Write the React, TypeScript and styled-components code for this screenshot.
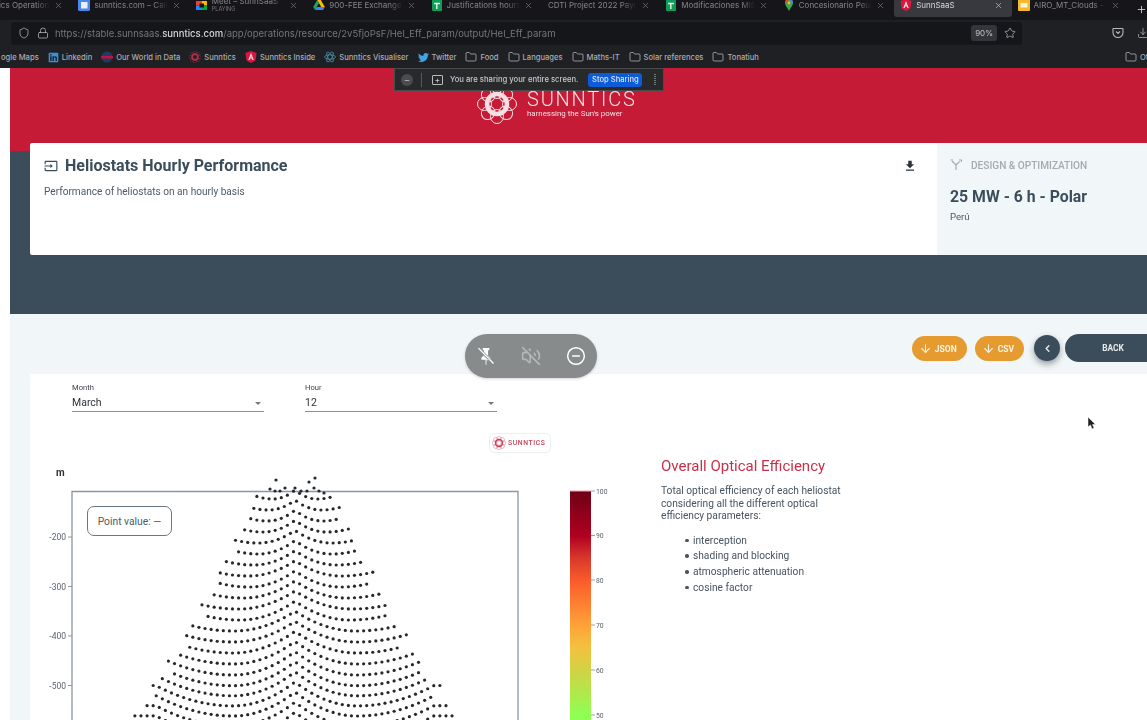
import React from "react";
import styled, { createGlobalStyle } from "styled-components";
import { ArrowDown, ChevronLeft, CircleMinus, Download, Folder, Lock, Plus, Shield, Star, VolumeOff, X } from "lucide-react";
import { FaLinkedin, FaTwitter } from "react-icons/fa";
import { MdFileDownload, MdInput } from "react-icons/md";

const GlobalStyle = createGlobalStyle`
  html, body { margin: 0; padding: 0; background: #fff; }
  body { font-family: Roboto, "Liberation Sans", sans-serif; }
  * { box-sizing: border-box; }
`;

const Viewport = styled.div`
  position: relative;
  width: 1147px;
  height: 720px;
  overflow: hidden;
`;

const Screen = styled.div`
  width: 1147px;
  height: 720px;
  overflow: hidden;
  filter: blur(0.55px);
`;

/* browser chrome */
const TabBar = styled.div`
  display: flex;
  height: 20px;
  margin-left: -45px;
  background: #16161a;
  font-family: Inter, "Liberation Sans", sans-serif;
`;

const Tab = styled.div<{ $active?: boolean }>`
  flex: 0 0 117.4px;
  min-width: 0;
  height: 17px;
  display: flex;
  align-items: center;
  gap: 4px;
  padding: 0 9px 7px 6px;
  border-radius: 0 0 3px 3px;
  background: ${(p) => (p.$active ? "#38393e" : "transparent")};
  color: ${(p) => (p.$active ? "#d8d8da" : "#85858a")};
`;

const TabText = styled.div`
  flex: 1;
  min-width: 0;
  overflow: hidden;
`;

const TabLabel = styled.div`
  overflow: hidden;
  white-space: nowrap;
  font-size: 8px;
  line-height: 9px;
  -webkit-mask-image: linear-gradient(90deg, #000 82%, transparent);
  mask-image: linear-gradient(90deg, #000 82%, transparent);
`;

const TabSub = styled.div`
  font-size: 5.5px;
  line-height: 7px;
  color: #77777b;
`;

const IconGap = styled.span`
  flex: 0 0 12px;
`;

const NewTab = styled.div`
  position: absolute;
  top: 0;
  left: 1136px;
  color: #ccc;
`;

const UrlRow = styled.div`
  display: flex;
  align-items: center;
  height: 26px;
  padding: 0 0 0 11px;
  background: #1f2024;
  color: #b8b8bb;
`;

const UrlField = styled.div`
  flex: 0 0 1011px;
  height: 23px;
  display: flex;
  align-items: center;
  gap: 7px;
  padding: 0 6px 0 7px;
  border-radius: 3px;
  background: #15161a;
`;

const UrlText = styled.span`
  flex: 1;
  margin-left: -1px;
  font: 9.5px Inter, "Liberation Sans", sans-serif;
  color: #76767a;
  white-space: nowrap;

  b {
    font-weight: 500;
    color: #d5d5d7;
  }
`;

const Zoom = styled.span`
  padding: 3px 4px;
  border-radius: 3px;
  background: #34353a;
  font: 8px Inter, "Liberation Sans", sans-serif;
  color: #c4c4c6;
`;

const RowTools = styled.div`
  margin-left: 90px;
  display: flex;
  gap: 13px;
  align-items: center;
`;

const BookmarkBar = styled.div`
  position: relative;
  display: flex;
  align-items: center;
  gap: 9px;
  height: 22px;
  padding-left: 1px;
  background: #1f2024;
  color: #adadb0;
  font: 500 7.6px Inter, "Liberation Sans", sans-serif;
  white-space: nowrap;
`;

const Bookmark = styled.span`
  display: inline-flex;
  align-items: center;
  gap: 3px;
`;

const OtherBookmark = styled(Bookmark)`
  position: absolute;
  left: 1125px;
`;

/* page */
const Page = styled.main`
  margin-left: 10px;
`;

const Hero = styled.section`
  height: 246px;
  padding-left: 20px;
  background: linear-gradient(#c51b36 83px, #3b4d5b 83px);
`;

const Brand = styled.div`
  height: 75px;
  padding: 16px 0 0 447px;
  display: flex;
  gap: 10px;
  color: #f4dfe2;
`;

const BrandName = styled.div`
  margin-top: 3px;
  font-size: 20px;
  font-weight: 300;
  letter-spacing: 1.8px;
  line-height: 24px;
`;

const BrandTag = styled.div`
  margin-top: -2px;
  font-size: 7.9px;
  line-height: 9px;
`;

const Card = styled.div`
  display: flex;
  height: 112px;
  border-radius: 2px;
  background: #fff;
`;

const CardMain = styled.div`
  flex: 0 0 907px;
  padding: 13px 20px 0 14px;
`;

const CardTitleRow = styled.div`
  display: flex;
  align-items: center;
  gap: 7px;
  color: #3b4d5b;
`;

const CardTitle = styled.h1`
  flex: 1;
  margin: 0;
  font-size: 16px;
  font-weight: 700;
  line-height: 20px;
`;

const CardText = styled.p`
  margin: 10px 0 0;
  font-size: 10.1px;
  color: #4d5b67;
`;

const CardSide = styled.aside`
  flex: 1;
  padding: 16px 0 0 13px;
  background: #f1f6f8;
`;

const SideLabel = styled.div`
  display: flex;
  align-items: center;
  gap: 9px;
  font-size: 10.1px;
  font-weight: 500;
  color: #a3abb1;
`;

const SideTitle = styled.div`
  margin-top: 16px;
  font-size: 15.8px;
  font-weight: 700;
  color: #3b4d5b;
`;

const SideText = styled.div`
  margin-top: 5px;
  font-size: 9.6px;
  color: #4d5b67;
`;

const Results = styled.section`
  height: 406px;
  padding-left: 20px;
  background: #f1f6f8;
`;

const Toolbar = styled.div`
  height: 60px;
  margin-right: -14px;
  padding-top: 20px;
  display: flex;
  justify-content: flex-end;
  align-items: flex-start;
`;

const PillButton = styled.button`
  height: 25px;
  margin-top: 2px;
  margin-right: 8px;
  padding: 0 10px 0 7px;
  display: flex;
  align-items: center;
  gap: 3px;
  border: 0;
  border-radius: 13px;
  background: #e69b30;
  color: #fdf3e2;
  font: 700 8.5px Roboto, sans-serif;
`;

const RoundButton = styled.button`
  width: 26px;
  height: 26px;
  margin: 1px 5px 0 2px;
  padding: 0;
  display: flex;
  align-items: center;
  justify-content: center;
  border: 0;
  border-radius: 50%;
  background: #3b4d5b;
  color: #e8edf0;
  box-shadow: 0 3px 6px rgba(30, 40, 50, 0.45);
`;

const BackButton = styled.button`
  width: 96px;
  height: 28px;
  border: 0;
  border-radius: 14px;
  background: #3b4d5b;
  color: #e4e9ec;
  font: 700 8.4px Roboto, sans-serif;
`;

const Panel = styled.div`
  height: 346px;
  padding-top: 9px;
  background: #fff;
`;

const Filters = styled.div`
  display: flex;
  gap: 41px;
  padding-left: 42px;
`;

const Field = styled.div`
  width: 192px;
  height: 29px;
  border-bottom: 1px solid #8b8f92;
`;

const FieldLabel = styled.div`
  font-size: 7.6px;
  line-height: 9px;
  color: #3e4449;
`;

const FieldValue = styled.div`
  display: flex;
  justify-content: space-between;
  align-items: center;
  padding-right: 3px;
  margin-top: 5px;
  font-size: 10.5px;
  line-height: 12px;
  color: #2e3338;
`;

const Caret = styled.span`
  width: 0;
  height: 0;
  border: 3px solid transparent;
  border-top: 3px solid #77797b;
  border-bottom: 0;
`;

const Badge = styled.div`
  width: 62px;
  height: 20px;
  margin: 21px 0 7px 459px;
  display: flex;
  align-items: center;
  gap: 2px;
  padding-left: 2px;
  border: 1px solid #eceff0;
  border-radius: 5px;
  color: #c8415a;
  font-size: 6.8px;
  font-weight: 500;
  letter-spacing: 0.6px;
`;

const ChartRow = styled.div`
  display: flex;
`;

const ChartFrame = styled.div`
  position: relative;
  flex: 0 0 600px;
  height: 270px;
`;

const PointValue = styled.div`
  position: absolute;
  left: 57px;
  top: 46px;
  width: 85px;
  height: 30px;
  display: flex;
  align-items: center;
  justify-content: center;
  border: 1px solid #6b7780;
  border-radius: 7px;
  background: #fff;
  font-size: 10.3px;
  color: #4d5b67;
`;

const Description = styled.div`
  margin: -3px 0 0 31px;
  width: 190px;
  color: #47545f;
`;

const DescTitle = styled.h2`
  margin: 0;
  font-size: 15px;
  font-weight: 400;
  line-height: 18px;
  color: #c8304a;
`;

const DescText = styled.p`
  margin: 10px 0 0;
  font-size: 10.2px;
  line-height: 12.6px;
`;

const DescList = styled.ul`
  margin: 10px 0 0;
  padding-left: 24px;
  list-style: none;
  font-size: 10.2px;
  line-height: 15.6px;
`;

const DescItem = styled.li`
  display: flex;
  align-items: center;
  gap: 4.5px;

  &::before {
    content: "";
    width: 3.5px;
    height: 3.5px;
    border-radius: 50%;
    background: #47545f;
  }
`;

/* things floating over the capture */
const ShareBar = styled.div`
  position: absolute;
  left: 394px;
  top: 68px;
  width: 270px;
  height: 23px;
  display: flex;
  align-items: center;
  padding-left: 6px;
  border: 1px solid #4a4b4c;
  background: #28292a;
  color: #c9c9ca;
  font: 500 7.7px Inter, "Liberation Sans", sans-serif;
  filter: blur(0.4px);
`;

const ShareMinus = styled.span`
  width: 12px;
  height: 12px;
  display: flex;
  align-items: center;
  justify-content: center;
  border-radius: 50%;
  background: #4b4c4d;
  color: #bbb;
  font-size: 9px;
`;

const ShareDivider = styled.span`
  width: 1px;
  height: 14px;
  margin: 0 10px 0 8px;
  background: #59595a;
`;

const ShareBox = styled.span`
  width: 11px;
  height: 10px;
  margin-right: 7px;
  display: flex;
  align-items: center;
  justify-content: center;
  border: 1px solid #bbb;
  border-radius: 1px;
  font-size: 8px;
  line-height: 8px;
`;

const StopButton = styled.button`
  width: 54px;
  height: 14px;
  margin-left: 10px;
  padding: 0;
  border: 0;
  border-radius: 3px;
  background: #0d5bd6;
  color: #dbe7fb;
  font: 500 7.6px Inter, "Liberation Sans", sans-serif;
`;

const ShareGrip = styled.span`
  width: 2px;
  height: 12px;
  margin-left: 12px;
  background: repeating-linear-gradient(#77787a 0 1px, transparent 1px 2px);
`;

const CallControls = styled.div`
  position: absolute;
  left: 465px;
  top: 334px;
  width: 132px;
  height: 44px;
  padding: 0 11px;
  display: flex;
  align-items: center;
  justify-content: space-between;
  border-radius: 22px;
  background: #878b8c;
  color: #fff;
  box-shadow: 0 1px 3px rgba(0, 0, 0, 0.18);
`;

const Pointer = styled.svg`
  position: absolute;
  left: 1087px;
  top: 416px;
`;

const TABS = [
  { label: "Sunntics Operations", icon: "gap" },
  { label: "sunntics.com – Calendar", icon: "calendar" },
  { label: "Meet – SunnSaaS", sub: "PLAYING", icon: "meet" },
  { label: "900-FEE Exchange rates", icon: "drive" },
  { label: "Justifications hours 2022", icon: "sheet" },
  { label: "CDTI Project 2022 Payroll", icon: "none" },
  { label: "Modificaciones MISIÓN", icon: "sheet" },
  { label: "Concesionario Peugeot", icon: "maps" },
  { label: "SunnSaaS", icon: "angular", active: true },
  { label: "AIRO_MT_Clouds - Google", icon: "slides" },
];

const BOOKMARKS = [
  { label: "Linkedin", icon: "linkedin" },
  { label: "Our World in Data", icon: "owid" },
  { label: "Sunntics", icon: "rosette" },
  { label: "Sunntics Inside", icon: "angular" },
  { label: "Sunntics Visualiser", icon: "react" },
  { label: "Twitter", icon: "twitter" },
  { label: "Food", icon: "folder" },
  { label: "Languages", icon: "folder" },
  { label: "Maths-IT", icon: "folder" },
  { label: "Solar references", icon: "folder" },
  { label: "Tonatiuh", icon: "folder" },
];

const Rosette = ({ size, color, ring }: { size: number; color: string; ring: number }) => (
  <svg width={size} height={size} viewBox="0 0 40 40" fill="none" style={{ flexShrink: 0 }}>
    {[0, 45, 90, 135, 180, 225, 270, 315].map((a) => (
      <ellipse key={a} cx="20" cy="7.5" rx="6.5" ry="7" stroke={color} strokeWidth="1" transform={`rotate(${a} 20 20)`} />
    ))}
    <circle cx="20" cy="20" r="10" stroke={color} strokeWidth={ring} fill="none" />
  </svg>
);

const Favicon = ({ kind }: { kind: string }) => {
  if (kind === "none") return null;
  if (kind === "gap") return <IconGap />;
  if (kind === "linkedin") return <FaLinkedin size={11} color="#3d8fd6" />;
  if (kind === "twitter") return <FaTwitter size={11} color="#3fa5e8" />;
  if (kind === "folder") return <Folder size={12} strokeWidth={1.4} color="#c4c4c6" />;
  if (kind === "rosette") return <Rosette size={12} color="#b8304c" ring={5} />;
  return (
    <svg width="12" height="12" viewBox="0 0 12 12" style={{ flexShrink: 0 }}>
      {kind === "calendar" && (
        <>
          <rect width="12" height="12" rx="1.5" fill="#4a87e8" />
          <rect x="3" y="3" width="6.5" height="6.5" fill="#e9eef7" />
        </>
      )}
      {kind === "meet" && (
        <>
          <rect x="0" y="2" width="6" height="4.5" fill="#ea4335" />
          <rect x="0" y="6.5" width="6" height="4.5" fill="#2684fc" />
          <rect x="6" y="2" width="5" height="4.5" fill="#ffba00" />
          <rect x="6" y="6.5" width="5" height="4.5" fill="#00ac47" />
          <rect x="3.5" y="4.5" width="4.5" height="4" fill="#16161a" />
        </>
      )}
      {kind === "drive" && (
        <>
          <path d="M4.2 1h3.6l4 7H8.2z" fill="#fbbc04" />
          <path d="M4.2 1 .2 8l1.8 3 4-7z" fill="#1fa463" />
          <path d="M3.8 8h8l-1.8 3H2z" fill="#4285f4" />
        </>
      )}
      {kind === "sheet" && (
        <>
          <rect x="1" width="10" height="12" rx="1" fill="#0f9d58" />
          <path d="M3 4.5h6M5.8 4.5V10" stroke="#eaf6ef" strokeWidth="1.4" />
        </>
      )}
      {kind === "maps" && (
        <>
          <path d="M6 0a4 4 0 0 1 4 4c0 2.5-2.5 4.5-4 8C4.500 8.500 2 6.500 2 4a4 4 0 0 1 4-4z" fill="#34a853" />
          <path d="M2 4a4 4 0 0 1 4-4l-1 3z" fill="#ea4335" />
          <path d="M6 0a4 4 0 0 1 4 4L7 3z" fill="#4285f4" />
          <circle cx="6" cy="4" r="1.4" fill="#fbbc04" />
        </>
      )}
      {kind === "angular" && (
        <>
          <path d="M6 0l5.500 2-1 7.500L6 12 1.500 9.500l-1-7.500z" fill="#d8193f" />
          <path d="M6 2 3.300 9h1.300l.5-1.500h1.800l.5 1.500h1.300zM5.500 6.500 6 4.800l.5 1.700z" fill="#f7e1e6" />
        </>
      )}
      {kind === "slides" && (
        <>
          <rect width="12" height="12" rx="1" fill="#f6b92b" />
          <rect x="2.500" y="4" width="7" height="4.500" fill="#fff3d6" />
        </>
      )}
      {kind === "owid" && (
        <>
          <circle cx="6" cy="6" r="5.500" fill="#1d3d63" />
          <rect y="5" width="12" height="2.500" fill="#c0143c" />
        </>
      )}
      {kind === "react" && (
        <g fill="none" stroke="#4a8fa8" strokeWidth="0.8">
          <ellipse cx="6" cy="6" rx="5.500" ry="2.200" />
          <ellipse cx="6" cy="6" rx="5.500" ry="2.200" transform="rotate(60 6 6)" />
          <ellipse cx="6" cy="6" rx="5.500" ry="2.200" transform="rotate(120 6 6)" />
        </g>
      )}
    </svg>
  );
};

// heliostat field: scalloped rows widening away from the tower
const buildField = () => {
  const dots: { x: number; y: number }[] = [
    { x: 276, y: 480 }, { x: 309, y: 482 }, { x: 315, y: 478 },
    { x: 270, y: 489 }, { x: 275, y: 491 }, { x: 280, y: 491 }, { x: 285, y: 488 },
    { x: 295, y: 488 }, { x: 301, y: 491 }, { x: 307, y: 491 }, { x: 314, y: 488 }, { x: 319, y: 491 }, { x: 324, y: 493 },
  ];
  const xc = 295;
  const spacing = 6.1;
  for (let r = 0; r < 26; r++) {
    const base = 490 + r * 10.1;
    const jag = 1 + 0.05 * Math.sin(r * 2.1);
    const hw = (40 + (base + 4 - 500) * 0.53) * jag;
    const lobe = Math.min(62, hw * 0.6);
    const sag = Math.min(24, 9 + r * 0.9);
    const count = Math.floor((2 * hw) / spacing);
    const start = xc - (count * spacing) / 2 + (r % 2 ? spacing / 4 : -spacing / 4);
    for (let i = 0; i <= count; i++) {
      const x = start + i * spacing;
      const t = (Math.abs(x - xc) - lobe) / lobe;
      const bend = t < 0 ? t * t : Math.min(0.85, 0.55 * t * t);
      dots.push({ x, y: base + sag * (1 - bend) });
    }
  }
  return dots;
};

const FIELD = buildField();
const Y_TICKS = [
  { label: "-200", y: 537 },
  { label: "-300", y: 586.5 },
  { label: "-400", y: 636 },
  { label: "-500", y: 685.5 },
];
const SCALE_TICKS = [
  { label: "100", y: 491 },
  { label: "90", y: 535.5 },
  { label: "80", y: 580 },
  { label: "70", y: 625 },
  { label: "60", y: 670 },
  { label: "50", y: 715 },
];

const FieldChart = () => (
  <svg width="600" height="270" viewBox="30 460 600 270" style={{ display: "block" }}>
    <defs>
      <linearGradient id="efficiency" x1="0" y1="491" x2="0" y2="715" gradientUnits="userSpaceOnUse">
        <stop offset="0" stopColor="#6f0016" />
        <stop offset="0.2" stopColor="#b00020" />
        <stop offset="0.3" stopColor="#d9382b" />
        <stop offset="0.4" stopColor="#fb5b2a" />
        <stop offset="0.6" stopColor="#ffa238" />
        <stop offset="0.7" stopColor="#f2c23e" />
        <stop offset="0.8" stopColor="#d2d244" />
        <stop offset="1" stopColor="#8eff52" />
      </linearGradient>
    </defs>
    <text x="56" y="476" fontSize="10" fontWeight="700" fill="#2e3338">m</text>
    <path d="M72 730V491.500H518V730" fill="none" stroke="#8a979e" strokeWidth="1.300" />
    {Y_TICKS.map((t) => (
      <g key={t.label}>
        <path d={`M68 ${t.y}h4`} stroke="#8a979e" />
        <text x="66" y={t.y + 3} textAnchor="end" fontSize="8.500" fill="#59646d">{t.label}</text>
      </g>
    ))}
    {FIELD.map((d, i) => (
      <circle key={i} cx={d.x} cy={d.y} r="1.600" fill="#26282a" />
    ))}
    <rect x="570" y="491" width="21" height="240" fill="url(#efficiency)" />
    <path d="M570 491h21" stroke="#f3a0ae" />
    {SCALE_TICKS.map((t) => (
      <g key={t.label}>
        <path d={`M591 ${t.y}h4`} stroke="#9aa3a9" />
        <text x="596" y={t.y + 2.500} fontSize="6.800" fill="#59646d">{t.label}</text>
      </g>
    ))}
  </svg>
);

const PinOffIcon = () => (
  <svg width="20" height="20" viewBox="0 0 24 24" fill="#fff">
    <path d="M8 2.500h8v2l-1.500 1v6l3 3v2.500h-5V22l-.5 1-.5-1v-5.500h-5V14l3-3V5.500L8 4.500z" />
    <path d="M3 3l18 18" stroke="#878b8c" strokeWidth="3.400" />
    <path d="M3 2.500l18 18.500" stroke="#fff" strokeWidth="1.500" />
  </svg>
);

const SplitIcon = () => (
  <svg width="12" height="12" viewBox="0 0 12 12" fill="none" stroke="#a3abb1" strokeWidth="1.200">
    <path d="M6 11V6L2 2M6 6l3.500-3.500" />
    <path d="M0.500 1h2.500M9 1h2.500v2" />
  </svg>
);

const PocketIcon = () => (
  <svg width="12" height="12" viewBox="0 0 12 12" fill="none" stroke="#b8b8bb" strokeWidth="1.100">
    <path d="M1.500 1.500h9a.5.5 0 0 1 .5.5v3.500a5 5 0 0 1-10 0V2a.5.5 0 0 1 .5-.5z" />
    <path d="M4 4.500l2 2 2-2" />
  </svg>
);

export default function App() {
  return (
    <Viewport>
      <GlobalStyle />
      <Screen>
        <TabBar>
          {TABS.map((tab) => (
            <Tab key={tab.label} $active={tab.active}>
              <Favicon kind={tab.icon} />
              <TabText>
                <TabLabel>{tab.label}</TabLabel>
                {tab.sub && <TabSub>{tab.sub}</TabSub>}
              </TabText>
              <X size={9} strokeWidth={1.600} />
            </Tab>
          ))}
        </TabBar>
        <UrlRow>
          <UrlField>
            <Shield size={12} strokeWidth={1.500} />
            <Lock size={12} strokeWidth={1.500} />
            <UrlText>
              https://stable.sunnsaas.<b>sunntics.com</b>/app/operations/resource/2v5fjoPsF/Hel_Eff_param/output/Hel_Eff_param
            </UrlText>
            <Zoom>90%</Zoom>
            <Star size={12} strokeWidth={1.500} />
          </UrlField>
          <RowTools>
            <PocketIcon />
            <Download size={12} strokeWidth={1.500} />
          </RowTools>
        </UrlRow>
        <BookmarkBar>
          <Bookmark>ogle Maps</Bookmark>
          {BOOKMARKS.map((b) => (
            <Bookmark key={b.label}>
              <Favicon kind={b.icon} />
              {b.label}
            </Bookmark>
          ))}
          <OtherBookmark>
            <Favicon kind="folder" />
            Ot
          </OtherBookmark>
        </BookmarkBar>
        <Page>
          <Hero>
            <Brand>
              <Rosette size={40} color="#f4dfe2" ring={4.500} />
              <div>
                <BrandName>SUNNTICS</BrandName>
                <BrandTag>harnessing the Sun's power</BrandTag>
              </div>
            </Brand>
            <Card>
              <CardMain>
                <CardTitleRow>
                  <MdInput size={14} />
                  <CardTitle>Heliostats Hourly Performance</CardTitle>
                  <MdFileDownload size={14} color="#2e3338" />
                </CardTitleRow>
                <CardText>Performance of heliostats on an hourly basis</CardText>
              </CardMain>
              <CardSide>
                <SideLabel>
                  <SplitIcon />
                  DESIGN &amp; OPTIMIZATION
                </SideLabel>
                <SideTitle>25 MW - 6 h - Polar</SideTitle>
                <SideText>Perú</SideText>
              </CardSide>
            </Card>
          </Hero>
          <Results>
            <Toolbar>
              <PillButton>
                <ArrowDown size={13} />
                JSON
              </PillButton>
              <PillButton>
                <ArrowDown size={13} />
                CSV
              </PillButton>
              <RoundButton>
                <ChevronLeft size={11} strokeWidth={3} />
              </RoundButton>
              <BackButton>BACK</BackButton>
            </Toolbar>
            <Panel>
              <Filters>
                <Field>
                  <FieldLabel>Month</FieldLabel>
                  <FieldValue>
                    March
                    <Caret />
                  </FieldValue>
                </Field>
                <Field>
                  <FieldLabel>Hour</FieldLabel>
                  <FieldValue>
                    12
                    <Caret />
                  </FieldValue>
                </Field>
              </Filters>
              <Badge>
                <Rosette size={14} color="#c8415a" ring={4} />
                SUNNTICS
              </Badge>
              <ChartRow>
                <ChartFrame>
                  <FieldChart />
                  <PointValue>Point value: —</PointValue>
                </ChartFrame>
                <Description>
                  <DescTitle>Overall Optical Efficiency</DescTitle>
                  <DescText>
                    Total optical efficiency of each heliostat considering all the different optical efficiency parameters:
                  </DescText>
                  <DescList>
                    <DescItem>interception</DescItem>
                    <DescItem>shading and blocking</DescItem>
                    <DescItem>atmospheric attenuation</DescItem>
                    <DescItem>cosine factor</DescItem>
                  </DescList>
                </Description>
              </ChartRow>
            </Panel>
          </Results>
        </Page>
      </Screen>
      <NewTab>
        <Plus size={11} />
      </NewTab>
      <ShareBar>
        <ShareMinus>–</ShareMinus>
        <ShareDivider />
        <ShareBox>+</ShareBox>
        You are sharing your entire screen.
        <StopButton>Stop Sharing</StopButton>
        <ShareGrip />
      </ShareBar>
      <CallControls>
        <PinOffIcon />
        <VolumeOff size={20} color="#b4b7b8" />
        <CircleMinus size={20} strokeWidth={1.800} />
      </CallControls>
      <Pointer width="9" height="14" viewBox="0 0 9 14">
        <path d="M1 1v10l2.500-2 1.500 4 2-1-1.500-3.500H8.500z" fill="#222" stroke="#fff" strokeWidth="0.500" />
      </Pointer>
    </Viewport>
  );
}
